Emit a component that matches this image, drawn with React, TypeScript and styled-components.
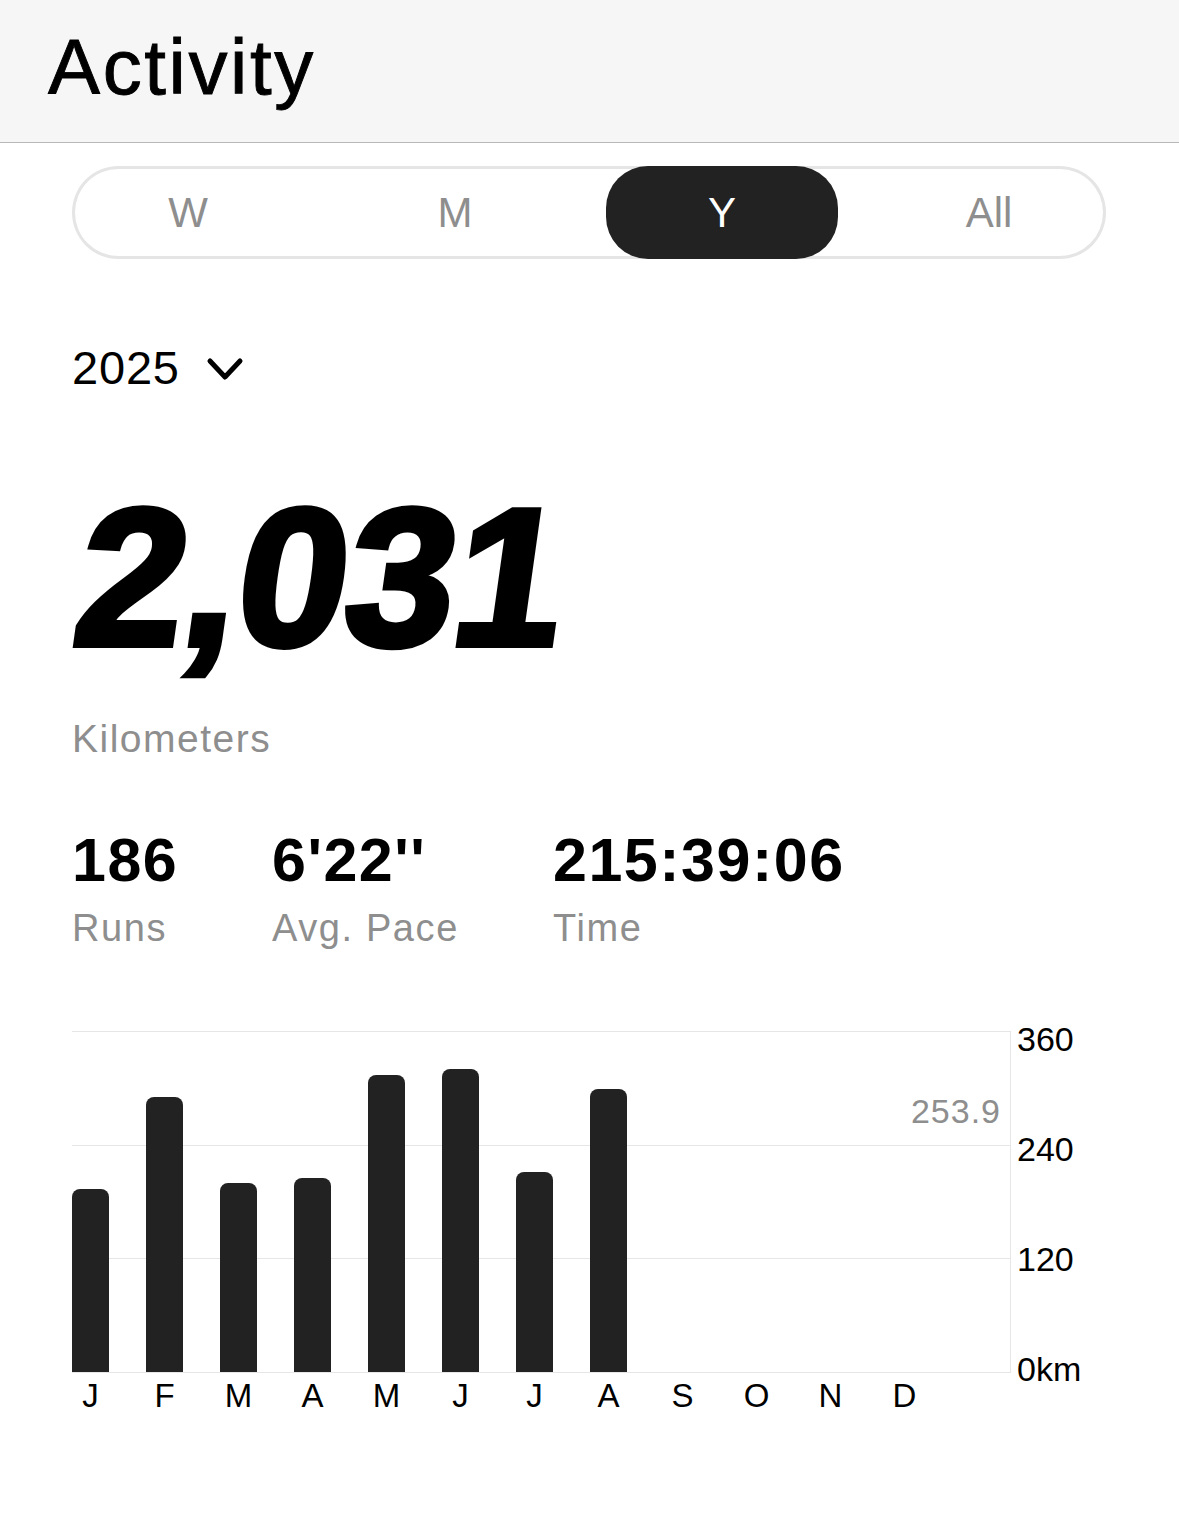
import React from "react";
import styled, { createGlobalStyle } from "styled-components";

const GlobalStyle = createGlobalStyle`
  html, body {
    margin: 0;
    padding: 0;
    background: #ffffff;
  }
  body {
    font-family: "Liberation Sans", Arial, Helvetica, sans-serif;
    color: #000;
    -webkit-font-smoothing: antialiased;
  }
`;

const Page = styled.div`
  width: 1179px;
  min-height: 1516px;
  background: #fff;
`;

const Header = styled.header`
  height: 143px;
  box-sizing: border-box;
  padding: 28px 0 0 48px;
  background: #f6f6f6;
  border-bottom: 1px solid #b8b8b8;
`;

const Title = styled.h1`
  margin: 0;
  font-size: 78px;
  line-height: 78px;
  font-weight: 400;
  letter-spacing: 2.6px;
  -webkit-text-stroke: 0.9px #000;
  color: #000;
`;

const Content = styled.main`
  padding: 0 73px 0 72px;
  display: flex;
  flex-direction: column;
`;

const Segmented = styled.div`
  margin-top: 23px;
  display: grid;
  grid-template-columns: repeat(4, 232px);
  column-gap: 35px;
  height: 93px;
  box-sizing: border-box;
  border-radius: 47px;
  box-shadow: inset 0 0 0 3px #e5e5e5;
`;

const Segment = styled.div<{ $active?: boolean }>`
  display: flex;
  align-items: center;
  justify-content: center;
  font-size: 42px;
  line-height: 1;
  color: ${(p) => (p.$active ? "#ffffff" : "#8e8e8e")};
  background: ${(p) => (p.$active ? "#222222" : "transparent")};
  border-radius: 42px;
`;

const YearRow = styled.div`
  margin-top: 86px;
  display: flex;
  align-items: center;
  gap: 26px;
  height: 46px;
`;

const YearText = styled.span`
  font-size: 47px;
  line-height: 46px;
  letter-spacing: 0.8px;
  color: #000;
`;

const Chevron = styled.svg`
  width: 40px;
  height: 40px;
  margin-top: 4px;
`;

const BigNumber = styled.div`
  margin-top: 89px;
  height: 196px;
  font-size: 196px;
  line-height: 1;
  font-weight: 700;
  color: #000;
  -webkit-text-stroke: 6px #000;
  letter-spacing: -1px;
  transform: skewX(-8deg);
  transform-origin: 0 166px;
  margin-left: -3px;
  white-space: nowrap;
`;

const Unit = styled.div`
  margin-top: 43px;
  font-size: 39px;
  line-height: 1;
  letter-spacing: 1.5px;
  color: #8e8e8e;
`;

const Stats = styled.div`
  margin-top: 72px;
  display: grid;
  grid-template-columns: 200px 281px auto;
`;

const Stat = styled.div`
  display: flex;
  flex-direction: column;
`;

const StatValue = styled.div`
  font-size: 61px;
  line-height: 1;
  font-weight: 700;
  letter-spacing: 1.5px;
  color: #000;
`;

const StatLabel = styled.div`
  margin-top: 18px;
  font-size: 38px;
  line-height: 1;
  letter-spacing: 1.6px;
  color: #8e8e8e;
`;

const Chart = styled.div`
  margin-top: 75px;
  display: grid;
  grid-template-columns: 939px auto;
  align-items: start;
`;

const PlotColumn = styled.div`
  display: flex;
  flex-direction: column;
`;

const Plot = styled.div`
  position: relative;
  margin-top: 9px;
  height: 342px;
  box-sizing: border-box;
  border-top: 1px solid #e6e6e6;
  border-bottom: 1px solid #e6e6e6;
  border-right: 1px solid #e6e6e6;
  background-image: linear-gradient(#e6e6e6, #e6e6e6),
    linear-gradient(#e6e6e6, #e6e6e6);
  background-size: 100% 1px;
  background-position: 0 113px, 0 226px;
  background-repeat: no-repeat;
`;

const Bars = styled.div`
  height: 100%;
  display: grid;
  grid-template-columns: repeat(12, 37px);
  column-gap: 37px;
  align-items: end;
`;

const Bar = styled.div`
  width: 37px;
  background: #222222;
  border-radius: 8px 8px 0 0;
`;

const AvgLabel = styled.span`
  position: absolute;
  top: 62px;
  right: 9px;
  font-size: 34px;
  line-height: 1;
  letter-spacing: 1px;
  color: #8e8e8e;
`;

const Months = styled.div`
  margin-top: 6px;
  display: grid;
  grid-template-columns: repeat(12, 37px);
  column-gap: 37px;
`;

const MonthLabel = styled.span`
  text-align: center;
  font-size: 33px;
  line-height: 1;
  color: #000;
`;

const Axis = styled.div`
  height: 364px;
  padding-left: 6px;
  display: flex;
  flex-direction: column;
  justify-content: space-between;
`;

const AxisLabel = styled.span`
  font-size: 34px;
  line-height: 1;
  color: #000;
`;

const tabs = ["W", "M", "Y", "All"];
const months = ["J", "F", "M", "A", "M", "J", "J", "A", "S", "O", "N", "D"];
const monthlyKm = [193.2, 290.1, 199.6, 204.9, 313.4, 319.6, 211.3, 299.0];
const maxKm = 360;
const plotHeight = 341;

export default function App() {
  return (
    <Page>
      <GlobalStyle />
      <Header>
        <Title>Activity</Title>
      </Header>
      <Content>
        <Segmented>
          {tabs.map((t) => (
            <Segment key={t} $active={t === "Y"}>
              {t}
            </Segment>
          ))}
        </Segmented>

        <YearRow>
          <YearText>2025</YearText>
          <Chevron viewBox="0 0 40 40" fill="none">
            <path
              d="M4 11 L19 27 L34 11"
              stroke="#000"
              strokeWidth="5"
              strokeLinecap="round"
              strokeLinejoin="round"
            />
          </Chevron>
        </YearRow>

        <BigNumber>2,031</BigNumber>
        <Unit>Kilometers</Unit>

        <Stats>
          <Stat>
            <StatValue>186</StatValue>
            <StatLabel>Runs</StatLabel>
          </Stat>
          <Stat>
            <StatValue>6'22''</StatValue>
            <StatLabel>Avg. Pace</StatLabel>
          </Stat>
          <Stat>
            <StatValue>215:39:06</StatValue>
            <StatLabel>Time</StatLabel>
          </Stat>
        </Stats>

        <Chart>
          <PlotColumn>
            <Plot>
              <Bars>
                {months.map((m, i) => (
                  <Bar
                    key={i}
                    style={{
                      height:
                        monthlyKm[i] !== undefined
                          ? `${Math.round((monthlyKm[i] / maxKm) * plotHeight)}px`
                          : "0px",
                    }}
                  />
                ))}
              </Bars>
              <AvgLabel>253.9</AvgLabel>
            </Plot>
            <Months>
              {months.map((m, i) => (
                <MonthLabel key={i}>{m}</MonthLabel>
              ))}
            </Months>
          </PlotColumn>
          <Axis>
            <AxisLabel>360</AxisLabel>
            <AxisLabel>240</AxisLabel>
            <AxisLabel>120</AxisLabel>
            <AxisLabel>0km</AxisLabel>
          </Axis>
        </Chart>
      </Content>
    </Page>
  );
}
